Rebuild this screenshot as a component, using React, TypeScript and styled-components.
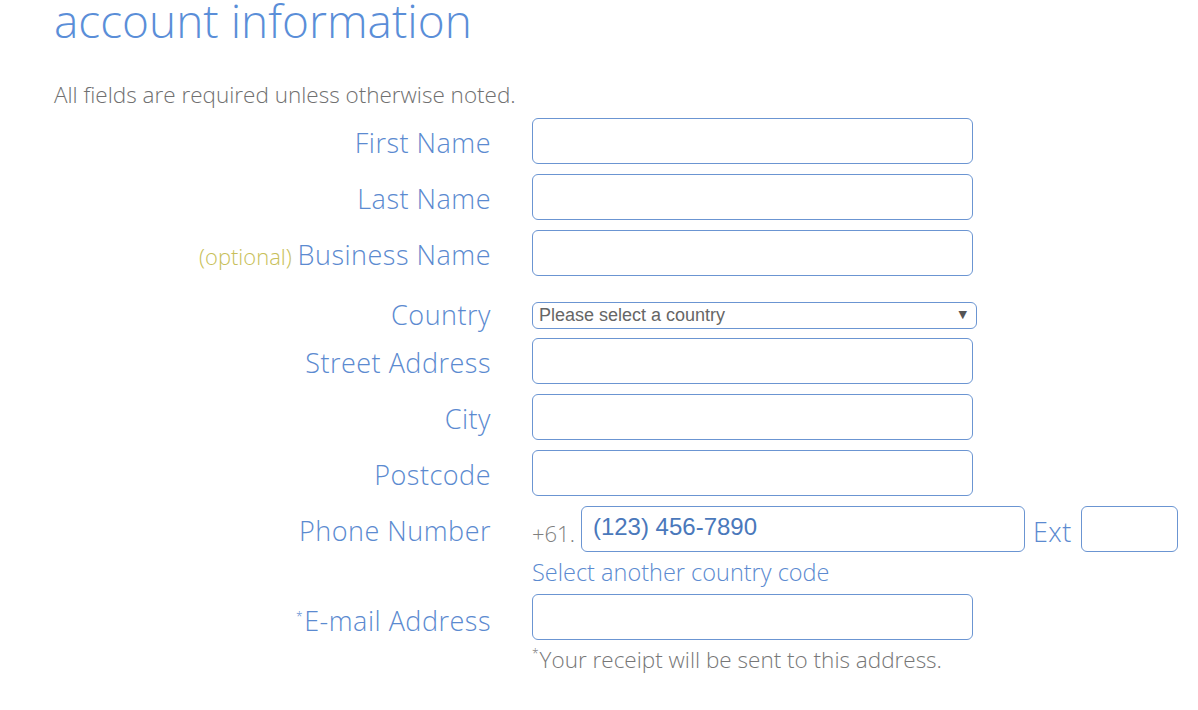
import * as React from 'react';
import styled, { createGlobalStyle } from 'styled-components';

const GlobalStyle = createGlobalStyle`
    html, body {
        margin: 0;
        padding: 0;
        background: #ffffff;
    }
    body {
        font-family: "Open Sans", "Lato", sans-serif;
    }
`;

const Page = styled.div`
    width: 1198px;
    height: 710px;
    overflow: hidden;
    padding-left: 54px;
    box-sizing: border-box;
`;

const Title = styled.h1`
    margin: -8px 0 0 0;
    font-family: "Open Sans", sans-serif;
    font-weight: 300;
    font-size: 46px;
    line-height: 56px;
    color: #5a8ed8;
`;

const Note = styled.p`
    margin: 33px 0 0 0;
    font-weight: 300;
    font-size: 22.5px;
    line-height: 28px;
    color: #707070;
`;

const Form = styled.form`
    display: flex;
    flex-direction: column;
`;

const Row = styled.div<{ $top?: number }>`
    display: grid;
    grid-template-columns: 437px auto;
    column-gap: 41px;
    align-items: center;
    margin-top: ${p => p.$top ?? 10}px;
`;

const Label = styled.label<{ $lift?: boolean }>`
    text-align: right;
    font-weight: 300;
    font-size: 27px;
    letter-spacing: 0.5px;
    line-height: 30px;
    color: #5b8ad0;
    padding-top: ${p => (p.$lift ? 0 : 4)}px;
    white-space: nowrap;
`;

const Optional = styled.span`
    font-size: 22px;
    letter-spacing: 0;
    color: #c8bf5a;
`;

const Star = styled.span`
    font-size: 12px;
    vertical-align: 10px;
    margin-right: 1px;
`;

const TextInput = styled.input<{ $width?: number }>`
    box-sizing: border-box;
    width: ${p => p.$width ?? 441}px;
    height: 46px;
    border: 1.5px solid #6b95d2;
    border-radius: 6px;
    padding: 0 0 4px 11px;
    font-family: "Liberation Sans", Arial, sans-serif;
    font-size: 24px;
    color: #4a78bb;
    outline: none;
    background: #fff;
`;

const SelectWrap = styled.div`
    position: relative;
    width: 445px;
    height: 27px;
`;

const Select = styled.select`
    appearance: none;
    box-sizing: border-box;
    width: 100%;
    height: 100%;
    border: 1.5px solid #6b95d2;
    border-radius: 6px;
    padding: 0 6px;
    font-family: "Liberation Sans", Arial, sans-serif;
    font-size: 18px;
    color: #666666;
    background: #fff;
    outline: none;
`;

const Caret = styled.span`
    position: absolute;
    right: 10px;
    top: 6px;
    font-family: "DejaVu Sans", sans-serif;
    font-size: 11px;
    color: #555;
    pointer-events: none;
`;

const PhoneLine = styled.div`
    display: flex;
    align-items: center;
`;

const Prefix = styled.span`
    font-weight: 300;
    font-size: 22px;
    color: #808080;
    padding-top: 8px;
    margin-right: 6px;
`;

const ExtLabel = styled.span`
    font-weight: 300;
    font-size: 27px;
    letter-spacing: 0.5px;
    color: #5b8ad0;
    padding-top: 4px;
    margin: 0 9px 0 8px;
`;

const HelpLink = styled.a`
    grid-column: 2;
    font-weight: 300;
    font-size: 23.5px;
    line-height: 24px;
    color: #5b8ad0;
    text-decoration: none;
`;

const Hint = styled.div`
    grid-column: 2;
    font-weight: 300;
    font-size: 22.5px;
    line-height: 26px;
    color: #777777;
`;

const fields: { label: string; optional?: boolean }[] = [
    { label: 'First Name' },
    { label: 'Last Name' },
    { label: 'Business Name', optional: true },
];

const addressFields = ['Street Address', 'City', 'Postcode'];

export default function App() {
    return (
        <Page>
            <GlobalStyle />
            <Title>account information</Title>
            <Note>All fields are required unless otherwise noted.</Note>
            <Form>
                {fields.map((f, i) => (
                    <Row key={f.label} $top={i === 0 ? 9 : 10}>
                        <Label>
                            {f.optional && <Optional>(optional) </Optional>}
                            {f.label}
                        </Label>
                        <TextInput />
                    </Row>
                ))}
                <Row $top={24}>
                    <Label $lift>Country</Label>
                    <SelectWrap>
                        <Select defaultValue="">
                            <option value="">Please select a country</option>
                            <option value="AU">Australia</option>
                        </Select>
                        <Caret>▼</Caret>
                    </SelectWrap>
                </Row>
                {addressFields.map((label, i) => (
                    <Row key={label} $top={i === 0 ? 8 : 10}>
                        <Label>{label}</Label>
                        <TextInput />
                    </Row>
                ))}
                <Row>
                    <Label>Phone Number</Label>
                    <PhoneLine>
                        <Prefix>+61.</Prefix>
                        <TextInput $width={444} defaultValue="(123) 456-7890" />
                        <ExtLabel>Ext</ExtLabel>
                        <TextInput $width={97} />
                    </PhoneLine>
                </Row>
                <Row $top={8}>
                    <HelpLink href="#">Select another country code</HelpLink>
                </Row>
                <Row $top={10}>
                    <Label><Star>*</Star>E-mail Address</Label>
                    <TextInput />
                </Row>
                <Row $top={1}>
                    <Hint><Star>*</Star>Your receipt will be sent to this address.</Hint>
                </Row>
            </Form>
        </Page>
    );
}
